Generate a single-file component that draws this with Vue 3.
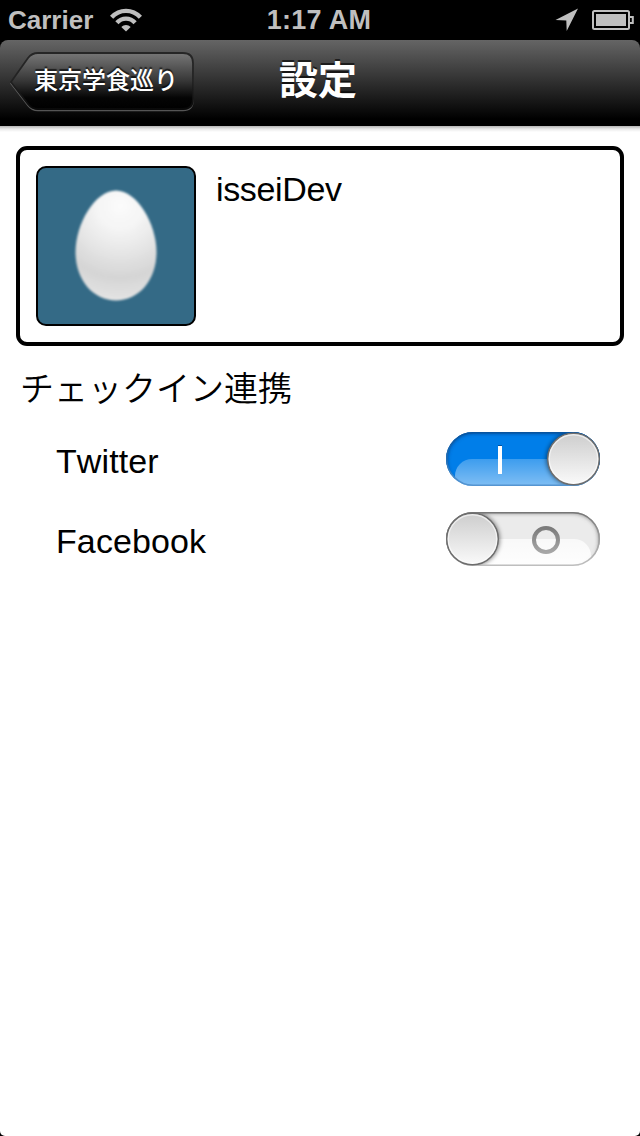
<script setup>
import { ref } from 'vue'

const services = ref([
  { name: 'Twitter', on: true },
  { name: 'Facebook', on: false },
])
</script>

<template>
  <div class="screen">
    <header class="status">
      <div class="carrier">
        <span class="carrier-name">Carrier</span>
        <svg class="wifi" width="32" height="24" viewBox="0 0 32 24">
          <g fill="none" stroke="#bfbfbf" stroke-width="4.4">
            <path d="M1.6 9.2C9.6 .7 22.4 .7 30.4 9.2" />
            <path d="M6.9 14.7C11.9 9.3 20.1 9.3 25.1 14.7" />
          </g>
          <path d="M11.3 19.1C13.9 16.2 18.1 16.2 20.7 19.1L16 23.6Z" fill="#bfbfbf" />
        </svg>
      </div>
      <span class="time">1:17 AM</span>
      <div class="indicators">
        <svg width="24" height="24" viewBox="0 0 24 24">
          <path d="M23 .5L11.7 23L11.3 12.6L.5 12Z" fill="#bfbfbf" />
        </svg>
        <svg width="42" height="20" viewBox="0 0 42 20">
          <rect x="1" y="1" width="36" height="18" rx="1.5" fill="none" stroke="#bfbfbf" stroke-width="2" />
          <rect x="4" y="4" width="30" height="12" fill="#bfbfbf" />
          <path d="M38 7H40.8V13H38" fill="none" stroke="#bfbfbf" stroke-width="2" />
        </svg>
      </div>
    </header>

    <nav class="navbar">
      <button class="back">
        <svg class="back-shape" width="186" height="62" viewBox="0 0 186 62">
          <defs>
            <linearGradient id="backFill" x1="0" y1="0" x2="0" y2="1">
              <stop offset="0" stop-color="#777" />
              <stop offset=".5" stop-color="#363636" />
              <stop offset=".8" stop-color="#050505" />
              <stop offset="1" stop-color="#000" />
            </linearGradient>
            <linearGradient id="backEdge" x1="0" y1="0" x2="0" y2="1">
              <stop offset="0" stop-color="#262626" />
              <stop offset=".5" stop-color="#222" />
              <stop offset="1" stop-color="#090909" />
            </linearGradient>
            <linearGradient id="backGlow" x1="0" y1="0" x2="0" y2="1">
              <stop offset="0" stop-color="#666" stop-opacity="0" />
              <stop offset=".5" stop-color="#666" />
              <stop offset="1" stop-color="#555" />
            </linearGradient>
          </defs>
          <path transform="translate(0 1.5)" d="M1 30L18 6C21 2 24 1 28 1H173Q183 1 183 11V47Q183 57 173 57H28C24 57 21 56 18 52Z" fill="none" stroke="url(#backGlow)" stroke-width="1.4" />
          <path d="M1 30L18 6C21 2 24 1 28 1H173Q183 1 183 11V47Q183 57 173 57H28C24 57 21 56 18 52Z" fill="url(#backFill)" stroke="url(#backEdge)" stroke-width="1.8" />
        </svg>
        <span class="back-label">東京学食巡り</span>
      </button>
      <h1 class="title">設定</h1>
      <span></span>
    </nav>

    <main class="content">
      <section class="profile">
        <svg class="avatar" width="160" height="160" viewBox="0 0 160 160">
          <defs>
            <radialGradient id="egg" gradientUnits="userSpaceOnUse" cx="84" cy="40" r="92">
              <stop offset="0" stop-color="#fbfbfb" />
              <stop offset=".25" stop-color="#f5f5f5" />
              <stop offset=".55" stop-color="#e3e3e3" />
              <stop offset=".78" stop-color="#d5d5d5" />
              <stop offset="1" stop-color="#e2e2e2" />
            </radialGradient>
            <filter id="eggSoft"><feGaussianBlur stdDeviation=".8" /></filter>
          </defs>
          <rect x="1" y="1" width="158" height="158" rx="9" fill="#346a86" stroke="#000" stroke-width="2" />
          <path d="M80 24.5C101 24.5 120.5 58 120.5 86C120.5 115 102 134.5 80 134.5C58 134.5 39.5 115 39.5 86C39.5 58 59 24.5 80 24.5Z" fill="url(#egg)" filter="url(#eggSoft)" />
        </svg>
        <span class="username">isseiDev</span>
      </section>

      <h2 class="heading">チェックイン連携</h2>

      <div v-for="service in services" :key="service.name" class="row">
        <span>{{ service.name }}</span>
        <button class="switch" :aria-pressed="service.on" @click="service.on = !service.on">
          <svg width="154" height="54" viewBox="0 0 154 54">
            <defs>
              <clipPath :id="'pill' + service.name"><rect width="154" height="54" rx="27" /></clipPath>
              <linearGradient :id="'gloss' + service.name" gradientUnits="userSpaceOnUse" x1="0" y1="27" x2="0" y2="54">
                <stop offset="0" stop-color="#fff" :stop-opacity="service.on ? .24 : .7" />
                <stop offset="1" stop-color="#fff" :stop-opacity="service.on ? .5 : .95" />
              </linearGradient>
              <linearGradient :id="'knob' + service.name" x1="0" y1="0" x2="0" y2="1">
                <stop offset="0" stop-color="#cdcdcd" />
                <stop offset="1" stop-color="#fafafa" />
              </linearGradient>
              <linearGradient :id="'edge' + service.name" x1="0" y1="0" x2="0" y2="1">
                <stop offset="0" :stop-color="service.on ? '#0754a0' : '#777'" />
                <stop offset=".5" :stop-color="service.on ? '#256fb3' : '#a0a0a0'" />
                <stop offset="1" :stop-color="service.on ? '#5595d1' : '#bebebe'" />
              </linearGradient>
              <linearGradient :id="'ring' + service.name" x1="0" y1="0" x2="0" y2="1">
                <stop offset="0" stop-color="#7b7b7b" />
                <stop offset="1" stop-color="#a6a6a6" />
              </linearGradient>
              <filter :id="'blur' + service.name" x="-20%" y="-20%" width="140%" height="140%"><feGaussianBlur stdDeviation="2" /></filter>
            </defs>
            <g :clip-path="`url(#pill${service.name})`">
              <rect width="154" height="54" :fill="service.on ? '#007ee9' : '#ebebeb'" />
              <rect x="9" y="27" width="136" height="40" rx="17" :fill="`url(#gloss${service.name})`" />
              <rect x="-1" y="-1" width="156" height="60" rx="28" fill="none" :stroke="service.on ? '#003e86' : '#777'" stroke-width="4" :filter="`url(#blur${service.name})`" />
              <circle :cx="service.on ? 127 : 27" cy="27" r="27" fill="#000" fill-opacity=".45" :filter="`url(#blur${service.name})`" />
            </g>
            <rect x=".75" y=".75" width="152.5" height="52.5" rx="26.25" fill="none" :stroke="`url(#edge${service.name})`" stroke-width="1.5" />
            <template v-if="service.on">
              <rect x="52" y="13" width="4" height="2" fill="#00509c" />
              <rect x="52" y="14" width="4" height="28" fill="#fff" />
            </template>
            <circle v-else cx="100" cy="28" r="12" fill="none" :stroke="`url(#ring${service.name})`" stroke-width="4" />
            <circle :cx="service.on ? 127.5 : 26.5" cy="27" r="25.7" :fill="`url(#knob${service.name})`" stroke="#6d6d6d" stroke-width="1.6" />
            <circle :cx="service.on ? 127.5 : 26.5" cy="27" r="24.3" fill="none" stroke="#fff" stroke-opacity=".6" stroke-width="1.4" />
          </svg>
        </button>
      </div>
    </main>
  </div>
</template>

<style>
body {
  background: #000;
}
</style>

<style scoped>
.screen {
  width: 640px;
  height: 1136px;
  background: #000;
  font-family: "Liberation Sans", "Noto Sans CJK JP", sans-serif;
  color: #000;
  display: flex;
  flex-direction: column;
  overflow: hidden;
}
svg {
  display: block;
  flex: none;
}
button {
  border: 0;
  padding: 0;
  background: none;
  font: inherit;
}
.status {
  height: 40px;
  display: grid;
  grid-template-columns: 1fr auto 1fr;
  align-items: center;
  padding: 0 6px 0 4px;
  color: #bfbfbf;
  font-size: 27px;
  line-height: 40px;
  font-weight: bold;
  flex: none;
}
.carrier {
  display: flex;
  align-items: center;
  gap: 17px;
  padding-left: 4px;
}
.carrier-name {
  font-size: 26px;
}
.time {
  letter-spacing: .3px;
}
.indicators {
  display: flex;
  justify-content: flex-end;
  align-items: center;
  gap: 13px;
  margin-top: -1px;
}
.navbar {
  height: 86px;
  box-sizing: border-box;
  padding: 0 14px 0 10px;
  display: grid;
  grid-template-columns: 1fr auto 1fr;
  align-items: start;
  background: linear-gradient(#656565, #000 92%);
  border-radius: 8px 8px 0 0;
  color: #fff;
  flex: none;
}
.back {
  display: grid;
  width: 186px;
  height: 62px;
  margin-top: 12px;
  color: #fff;
}
.back-shape,
.back-label {
  grid-area: 1 / 1;
}
.back-label {
  padding-left: 24px;
  text-align: left;
  font-family: "Noto Sans CJK JP", sans-serif;
  font-size: 24px;
  line-height: 54px;
  font-weight: 500;
  white-space: nowrap;
  text-shadow: 0 -2px 1px rgba(0, 0, 0, .65);
}
.title {
  margin: 0;
  font-size: 39px;
  line-height: 82px;
  font-weight: bold;
  text-shadow: 0 -2px 0 rgba(0, 0, 0, .6);
}
.content {
  flex: 1;
  box-sizing: border-box;
  padding: 20px 16px 0;
  background: linear-gradient(#b4b4b4, #e9e9e9 3px, #fff 6px);
  border-radius: 0 0 5px 5px;
}
.profile {
  height: 200px;
  box-sizing: border-box;
  border: 4px solid #000;
  border-radius: 11px;
  padding: 16px;
  display: flex;
  gap: 20px;
  font-size: 34px;
}
.username {
  line-height: 46px;
  letter-spacing: -.35px;
}
.heading {
  margin: 19px 0 23px 4px;
  font-family: "Noto Sans CJK JP", sans-serif;
  font-size: 34px;
  line-height: 44px;
  font-weight: 350;
}
.row {
  height: 54px;
  padding: 0 24px 0 40px;
  margin: 0 0 26px;
  display: flex;
  justify-content: space-between;
  align-items: center;
  font-size: 34px;
  line-height: 54px;
  font-kerning: none;
  letter-spacing: .1px;
}
.row > span {
  padding-top: 4px;
}
</style>
